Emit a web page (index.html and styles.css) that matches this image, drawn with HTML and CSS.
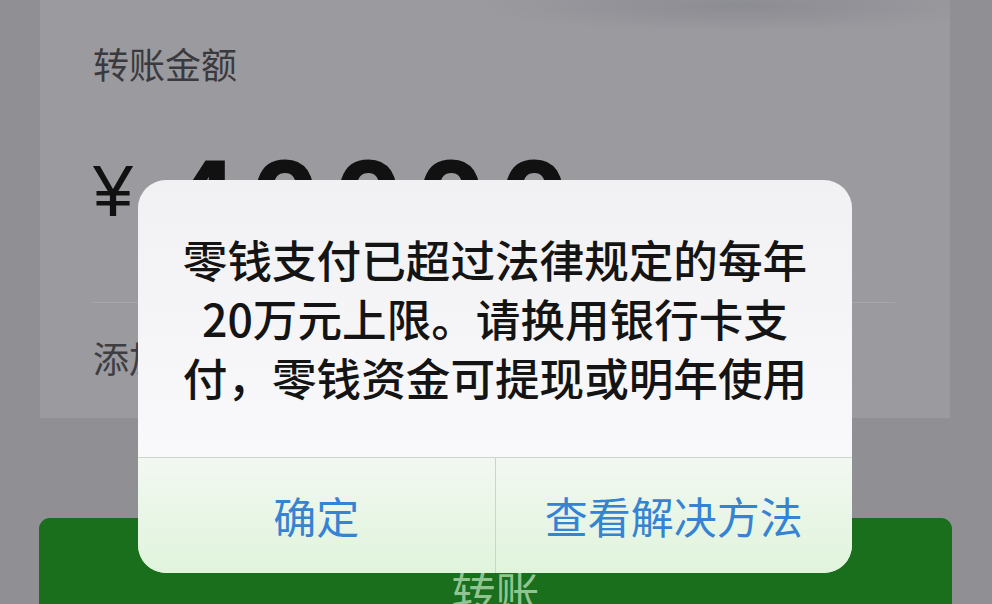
FILE: index.html
```html
<!DOCTYPE html>
<html lang="zh-CN">
<head>
<meta charset="utf-8">
<title>转账</title>
<link rel="stylesheet" href="styles.css">
</head>
<body>
<div class="page">
  <section class="card">
    <div class="label">转账金额</div>
    <div class="amount">
      <span class="yen">¥</span>
      <span class="num">40000</span>
    </div>
    <div class="sep"></div>
    <div class="note">添加转账说明</div>
  </section>
  <div class="pay-btn">转账</div>

  <div class="dialog">
    <div class="msg">零钱支付已超过法律规定的每年<br>20万元上限。请换用银行卡支<br>付，零钱资金可提现或明年使用</div>
    <div class="actions">
      <div class="act">确定</div>
      <div class="act">查看解决方法</div>
    </div>
  </div>
</div>
</body>
</html>
```

FILE: styles.css
```css
* { box-sizing: border-box; }
html, body {
  margin: 0;
  padding: 0;
}
body {
  width: 992px;
  height: 604px;
  overflow: hidden;
  background: #8f8f94;
  font-family: "Noto Sans CJK SC", "Noto Sans", sans-serif;
}
.page {
  position: relative;
  width: 992px;
  height: 604px;
  overflow: hidden;
  padding: 0 42px 0 40px;
}
.card {
  height: 418px;
  background:
    radial-gradient(ellipse 260px 26px at 700px 6px, rgba(128,128,136,0.55), rgba(128,128,136,0)),
    #9a9a9f;
  padding: 45px 55px 0 53px;
}
.label {
  font-size: 36px;
  line-height: 36px;
  color: #3a3a3e;
}
.amount {
  margin-top: 69px;
  height: 110px;
  display: flex;
  align-items: flex-start;
  color: #111;
  font-family: "Liberation Sans", Arial, sans-serif;
}
.yen {
  font-size: 72px;
  line-height: 72px;
  margin-top: 5px;
  width: 74px;
}
.num {
  font-size: 126px;
  line-height: 126px;
  font-weight: 700;
  letter-spacing: 13px;
  margin-top: -8px;
}
.sep {
  margin-top: 42px;
  height: 1px;
  background: #a6a6ab;
}
.note {
  margin-top: 36px;
  font-size: 36px;
  line-height: 36px;
  color: #3e3e42;
}
.pay-btn {
  margin-top: 100px;
  height: 160px;
  border-radius: 11px;
  background: #196f1b;
  color: #92c492;
  font-size: 44px;
  line-height: 44px;
  text-align: center;
  padding-top: 51px;
  margin-right: -2px;
  margin-left: -1px;
}
.dialog {
  position: absolute;
  left: 138px;
  top: 180px;
  width: 714px;
  height: 393px;
  border-radius: 28px;
  overflow: hidden;
  background: linear-gradient(#f1f1f3, #f8f8fa 60%, #f9faf9);
  display: flex;
  flex-direction: column;
}
.msg {
  height: 277px;
  padding-top: 49px;
  text-align: center;
  font-size: 44.6px;
  line-height: 59px;
  font-weight: 500;
  color: #141414;
  white-space: nowrap;
}
.actions {
  flex: 1;
  display: flex;
  border-top: 1px solid #cfd6d0;
  background: linear-gradient(#f2f8f1, #e0f4dc);
}
.act {
  flex: 1;
  display: flex;
  align-items: center;
  justify-content: center;
  font-size: 43px;
  color: #3583d3;
  padding-bottom: 2px;
}
.act + .act {
  border-left: 1px solid #c6d9c6;
}
```
